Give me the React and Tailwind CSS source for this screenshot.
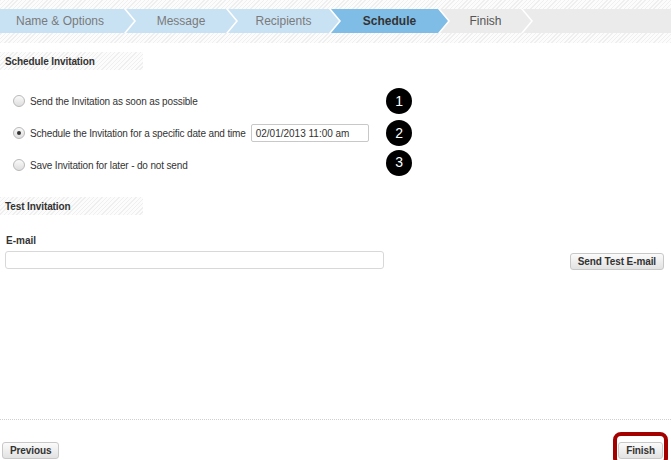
import React from "react";

const stripes =
  "bg-[repeating-linear-gradient(135deg,#efefef_0px,#efefef_1px,#fcfcfc_1px,#fcfcfc_3px)]";

const steps = [
  { label: "Name & Options", w: "w-[134px]", bg: "bg-[#c9e2f3]", text: "text-[#7a7a7a]", first: true },
  { label: "Message", w: "w-[110px]", bg: "bg-[#c9e2f3]", text: "text-[#7a7a7a]" },
  { label: "Recipients", w: "w-[111px]", bg: "bg-[#c9e2f3]", text: "text-[#7a7a7a]" },
  { label: "Schedule", w: "w-[117px]", bg: "bg-[#7fbde6]", text: "text-[#333] font-bold" },
  { label: "Finish", w: "w-[91px]", bg: "bg-[#ebebeb]", text: "text-[#555]" },
];

function Radio({ checked }) {
  return (
    <span className="flex h-[12px] w-[12px] shrink-0 items-center justify-center rounded-full border border-[#b9b9b9] bg-gradient-to-b from-[#fafafa] to-[#dedede]">
      {checked && <span className="h-[4px] w-[4px] rounded-full bg-[#333]" />}
    </span>
  );
}

function Badge({ n }) {
  return (
    <span className="flex h-[26px] w-[26px] items-center justify-center rounded-full bg-black text-[14px] text-white">
      {n}
    </span>
  );
}

function SectionHeader({ children }) {
  return (
    <div className={`flex h-[18px] w-[143px] items-center pl-[5px] text-[10px] font-bold tracking-[-0.1px] text-[#333] ${stripes}`}>
      {children}
    </div>
  );
}

function Button({ children }) {
  return (
    <button className="h-[17px] whitespace-nowrap rounded-[3px] border border-[#c8c8c8] bg-gradient-to-b from-[#fbfbfb] to-[#e2e2e2] px-[7px] text-[10px] font-bold leading-[15px] tracking-[-0.1px] text-[#333]">
      {children}
    </button>
  );
}

export default function App() {
  return (
    <div className="flex h-[460px] w-[671px] flex-col overflow-hidden bg-white font-['Liberation_Sans',Arial,sans-serif]">
      {/* wizard steps */}
      <div className={`h-[43px] shrink-0 pt-[9px] ${stripes}`}>
        <div className="flex h-[24px] bg-white">
          {steps.map((s) => (
            <div
              key={s.label}
              className={`${s.w} ${s.bg} ${s.text} flex shrink-0 items-center justify-center text-[12px] ${
                s.first
                  ? "[clip-path:polygon(0_0,calc(100%-10px)_0,100%_50%,calc(100%-10px)_100%,0_100%)] pr-[14px]"
                  : "-ml-[8px] [clip-path:polygon(0_0,calc(100%-10px)_0,100%_50%,calc(100%-10px)_100%,0_100%,10px_50%)]"
              }`}
            >
              {s.label}
            </div>
          ))}
          <div className="-ml-[8px] flex-1 bg-[#ebebeb] [clip-path:polygon(0_0,100%_0,100%_100%,0_100%,10px_50%)]" />
        </div>
      </div>

      {/* schedule */}
      <div className="mt-[9px]">
        <SectionHeader>Schedule Invitation</SectionHeader>
      </div>
      <div className="mt-[15px] flex flex-col whitespace-nowrap text-[10px] tracking-[-0.15px] text-[#333]">
        <div className="flex h-[32px] items-center">
          <div className="flex w-[386px] items-center gap-[5px] pl-[13px]">
            <Radio />
            <span>Send the Invitation as soon as possible</span>
          </div>
          <Badge n="1" />
        </div>
        <div className="flex h-[32px] items-center">
          <div className="flex w-[386px] items-center gap-[5px] pl-[13px]">
            <Radio checked />
            <span>Schedule the Invitation for a specific date and time</span>
            <div className="flex h-[18px] w-[118px] items-center rounded-[2px] border border-[#c8c8c8] pl-[4px] text-[10px] tracking-normal text-[#333]">
              02/01/2013 11:00 am
            </div>
          </div>
          <Badge n="2" />
        </div>
        <div className="flex h-[32px] items-center">
          <div className="flex w-[386px] items-center gap-[5px] pl-[13px]">
            <Radio />
            <span>Save Invitation for later - do not send</span>
          </div>
          <div className="-mt-[5px]">
            <Badge n="3" />
          </div>
        </div>
      </div>

      {/* test */}
      <div className="mt-[16px]">
        <SectionHeader>Test Invitation</SectionHeader>
      </div>
      <div className="mt-[19px] pl-[6px] text-[10px] font-bold leading-[13px] text-[#333]">E-mail</div>
      <div className="mt-[1px] flex items-center">
        <div className="ml-[5px] h-[18px] w-[379px] rounded-[3px] border border-[#d8d8d8] bg-white" />
        <div className="ml-auto mr-[7px]">
          <Button>Send Test E-mail</Button>
        </div>
      </div>

      {/* footer */}
      <div className="mt-auto flex h-[41px] shrink-0 items-start justify-between border-t border-dotted border-[#d0d0d0] pt-[12px]">
        <div className="ml-[2px] mt-[5px]">
          <Button>Previous</Button>
        </div>
        <div className="mr-[3px] rounded-[8px] border-[4px] border-[#a30000] p-[1px]">
          <Button>Finish</Button>
        </div>
      </div>
    </div>
  );
}
